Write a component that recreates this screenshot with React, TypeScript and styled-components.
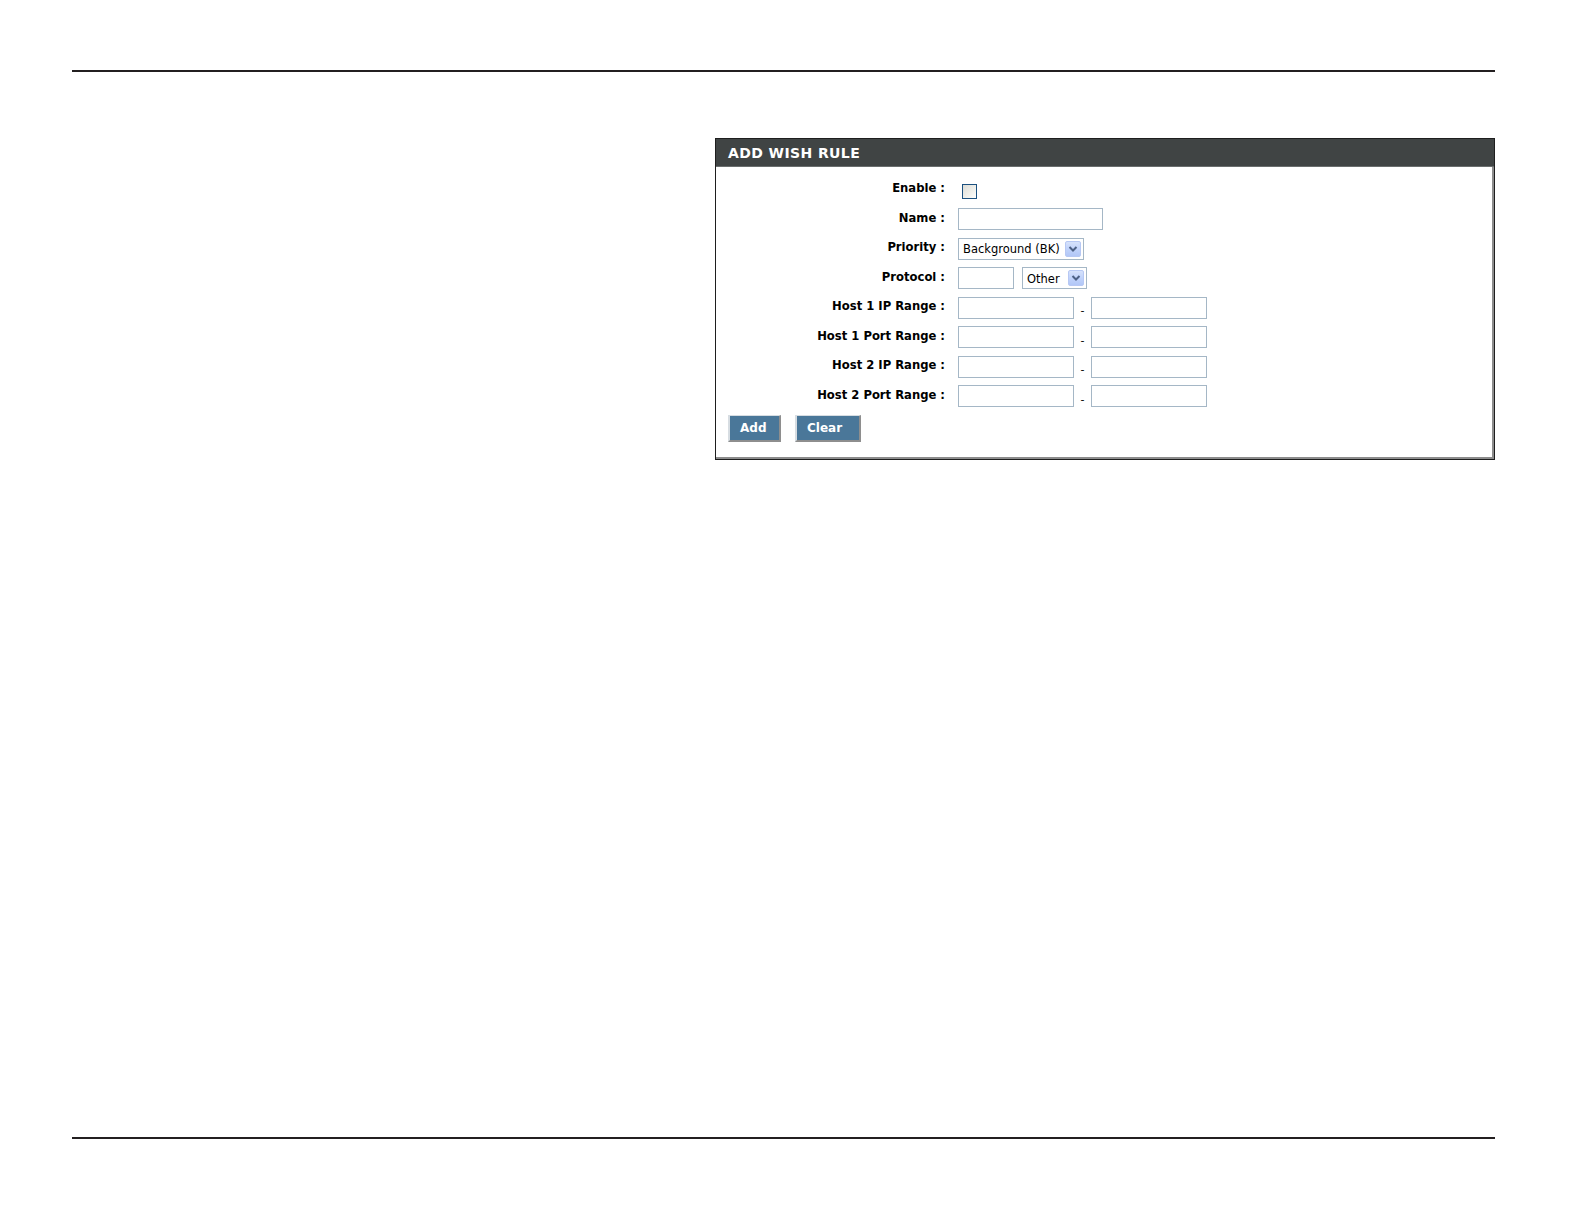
import React from "react";
import styled, { createGlobalStyle } from "styled-components";

const GlobalStyle = createGlobalStyle`
  html, body {
    margin: 0;
    padding: 0;
    background: #ffffff;
  }
  body {
    font-family: "DejaVu Sans", Verdana, sans-serif;
  }
`;

const Page = styled.div`
  box-sizing: border-box;
  height: 1225px;
  overflow: hidden;
  padding: 70px 90px 86px 72px;
  display: flex;
  flex-direction: column;
`;

const Rule = styled.div`
  height: 2px;
  background: #231f20;
  flex-shrink: 0;
`;

const Content = styled.div`
  flex: 1;
  padding: 66px 0 0 643px;
`;

const Panel = styled.div`
  width: 780px;
  box-sizing: border-box;
  border: 1px solid #1e1e1e;
  background: #ffffff;
`;

const PanelHeader = styled.div`
  height: 28px;
  background: #404444;
  border-bottom: 1px solid #6a6e6e;
  color: #ffffff;
  font-family: "DejaVu Sans", Verdana, sans-serif;
  font-size: 14px;
  font-weight: bold;
  letter-spacing: 0.4px;
  display: flex;
  align-items: center;
  padding-left: 12px;
  padding-top: 1px;
  box-sizing: border-box;
`;

const PanelBody = styled.div`
  border-right: 2px solid #8c8c8c;
  border-bottom: 2px solid #8c8c8c;
  padding: 8px 0 15px 0;
`;

const FormGrid = styled.div`
  display: grid;
  grid-template-columns: 229px 1fr;
  column-gap: 13px;
  grid-auto-rows: 29.5px;
  align-items: center;
`;

const Label = styled.div`
  text-align: right;
  font-family: "DejaVu Sans", Verdana, sans-serif;
  font-size: 11.6px;
  font-weight: bold;
  color: #000000;
  white-space: nowrap;
  margin-top: -3px;
`;

const Controls = styled.div`
  display: flex;
  align-items: center;
`;

const TextBox = styled.div<{ $w: number }>`
  width: ${({ $w }) => $w}px;
  height: 22px;
  box-sizing: border-box;
  border: 1px solid #a5b7c6;
  background: #ffffff;
`;

const Dash = styled.span`
  width: 17px;
  text-align: center;
  font-family: "DejaVu Sans", Verdana, sans-serif;
  font-size: 11px;
  color: #000;
  margin-top: 6px;
`;

const CheckBox = styled.div`
  width: 15px;
  height: 15px;
  box-sizing: border-box;
  margin: 3px 0 0 4px;
  border: 1px solid #1c5180;
  background: linear-gradient(135deg, #dcdcd6 0%, #f4f4f0 70%, #ffffff 100%);
`;

const SelectBox = styled.div<{ $w: number; $ml?: number }>`
  width: ${({ $w }) => $w}px;
  height: 22px;
  margin-left: ${({ $ml }) => $ml ?? 0}px;
  box-sizing: border-box;
  border: 1px solid #a5b7c6;
  background: #ffffff;
  display: flex;
  align-items: center;
  justify-content: space-between;
  padding: 0 2px 0 4px;
  font-family: "DejaVu Sans", Verdana, sans-serif;
  font-size: 11.5px;
  color: #000;
`;

const SelectValue = styled.span`
  white-space: nowrap;
  padding-top: 1px;
`;

const ArrowBtn = styled.div`
  width: 16px;
  height: 16px;
  box-sizing: border-box;
  border-radius: 2px;
  border: 1px solid #b7c8f4;
  background: linear-gradient(180deg, #d6e2fb 0%, #c1d3fb 50%, #b2c7f7 100%);
  display: flex;
  align-items: center;
  justify-content: center;
`;

const ButtonRow = styled.div`
  display: flex;
  gap: 14px;
  padding: 4px 0 0 12px;
`;

const Button = styled.div<{ $w: number }>`
  width: ${({ $w }) => $w}px;
  height: 27px;
  box-sizing: border-box;
  background: #4a7799;
  border-top: 1px solid #d7dde2;
  border-left: 2px solid #d7dde2;
  border-right: 2px solid #8e8e8e;
  border-bottom: 2px solid #8e8e8e;
  color: #ffffff;
  font-family: "DejaVu Sans", Verdana, sans-serif;
  font-size: 12px;
  font-weight: bold;
  display: flex;
  align-items: center;
  padding-left: 10px;
  padding-bottom: 1px;
`;

const Chevron = () => (
  <svg width="10" height="8" viewBox="0 0 10 8">
    <path d="M1.5 2 L5 5.5 L8.5 2" fill="none" stroke="#4d6185" strokeWidth="2" />
  </svg>
);

const Select = ({ value, w, ml }: { value: string; w: number; ml?: number }) => (
  <SelectBox $w={w} $ml={ml}>
    <SelectValue>{value}</SelectValue>
    <ArrowBtn>
      <Chevron />
    </ArrowBtn>
  </SelectBox>
);

const RangeRow = () => (
  <Controls>
    <TextBox $w={116} />
    <Dash>-</Dash>
    <TextBox $w={116} />
  </Controls>
);

const ranges = [
  "Host 1 IP Range :",
  "Host 1 Port Range :",
  "Host 2 IP Range :",
  "Host 2 Port Range :",
];

export default function App() {
  return (
    <>
      <GlobalStyle />
      <Page>
        <Rule />
        <Content>
          <Panel>
            <PanelHeader>ADD WISH RULE</PanelHeader>
            <PanelBody>
              <FormGrid>
                <Label>Enable :</Label>
                <Controls>
                  <CheckBox />
                </Controls>

                <Label>Name :</Label>
                <Controls>
                  <TextBox $w={145} />
                </Controls>

                <Label>Priority :</Label>
                <Controls>
                  <Select value="Background (BK)" w={126} />
                </Controls>

                <Label>Protocol :</Label>
                <Controls>
                  <TextBox $w={56} />
                  <Select value="Other" w={65} ml={8} />
                </Controls>

                {ranges.map((r) => (
                  <React.Fragment key={r}>
                    <Label>{r}</Label>
                    <RangeRow />
                  </React.Fragment>
                ))}
              </FormGrid>
              <ButtonRow>
                <Button $w={53}>Add</Button>
                <Button $w={66}>Clear</Button>
              </ButtonRow>
            </PanelBody>
          </Panel>
        </Content>
        <Rule />
      </Page>
    </>
  );
}
